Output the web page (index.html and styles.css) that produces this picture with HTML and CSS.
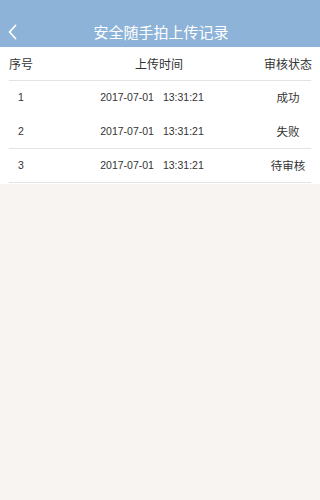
FILE: index.html
```html
<!DOCTYPE html>
<html lang="zh">
<head>
<meta charset="utf-8">
<title>安全随手拍上传记录</title>
<link rel="stylesheet" href="styles.css">
</head>
<body>
<div class="page">
  <header class="topbar">
    <div class="nav">
      <svg class="back" width="10" height="16" viewBox="0 0 10 16" aria-hidden="true">
        <polyline points="7.5,1.5 1.5,8 7.5,14.5" fill="none" stroke="#ffffff" stroke-width="1.8" stroke-linecap="round" stroke-linejoin="round"/>
      </svg>
      <h1 class="title">安全随手拍上传记录</h1>
    </div>
  </header>
  <section class="records">
    <div class="row head">
      <div class="c1">序号</div>
      <div class="c2">上传时间</div>
      <div class="c3">审核状态</div>
    </div>
    <div class="row no-line">
      <div class="c1 num">1</div>
      <div class="c2 num"><span>2017-07-01</span><span class="time">13:31:21</span></div>
      <div class="c3 status">成功</div>
    </div>
    <div class="row">
      <div class="c1 num">2</div>
      <div class="c2 num"><span>2017-07-01</span><span class="time">13:31:21</span></div>
      <div class="c3 status">失败</div>
    </div>
    <div class="row">
      <div class="c1 num">3</div>
      <div class="c2 num"><span>2017-07-01</span><span class="time">13:31:21</span></div>
      <div class="c3 status">待审核</div>
    </div>
  </section>
</div>
</body>
</html>
```
FILE: styles.css
```css
html, body {
  margin: 0;
  padding: 0;
}
body {
  background: #f7f4f2;
  font-family: "Liberation Sans", "Noto Sans CJK SC", sans-serif;
  color: #333333;
}
.page {
  min-height: 500px;
  background: #f7f4f2;
}
.topbar {
  background: #8db3d8;
  padding-top: 15px;
}
.nav {
  height: 32px;
  display: flex;
  align-items: center;
  justify-content: center;
  position: relative;
}
.back {
  position: absolute;
  left: 8px;
  top: 9px;
}
.title {
  margin: 0 0 0 2px;
  font-family: "Noto Sans CJK SC", sans-serif;
  font-weight: 400;
  font-size: 15px;
  color: #ffffff;
}
.records {
  background: #ffffff;
  padding: 0 9px 1px;
}
.row {
  display: grid;
  grid-template-columns: 24px 1fr 47px;
  align-items: center;
  height: 33px;
  border-bottom: 1px solid #e3e3e3;
  font-size: 12px;
  font-family: "Noto Sans CJK SC", sans-serif;
}
.row.no-line {
  border-bottom-color: transparent;
}
.row div {
  text-align: center;
  white-space: nowrap;
  line-height: 1;
}
.head .c2 {
  padding-left: 21px;
}
.num {
  font-family: "Liberation Sans", sans-serif;
  font-size: 10.5px;
}
.c2.num {
  padding-left: 7px;
}
.time {
  margin-left: 9px;
}
.status {
  font-size: 11.5px;
  padding-left: 1px;
}
```
